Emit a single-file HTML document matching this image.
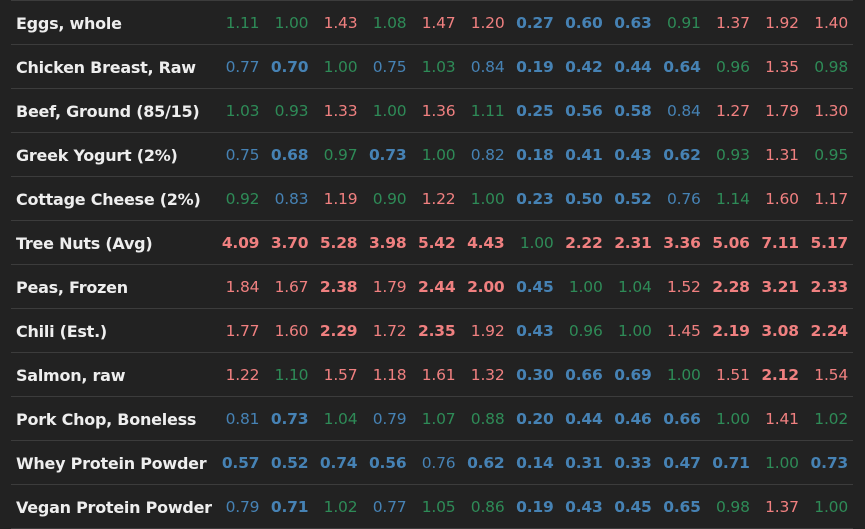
<!DOCTYPE html>
<html><head><meta charset="utf-8"><style>
html,body{margin:0;padding:0;background:#222;width:865px;height:529px;overflow:hidden}
table{border-collapse:collapse;table-layout:fixed;position:absolute;left:11px;top:0;width:842px;font-family:"DejaVu Sans","Liberation Sans",sans-serif;font-size:15.5px}
td{height:42px;padding:1px 0 0 0;border-bottom:1px solid #3c3c3c;white-space:nowrap}
tr:first-child td{border-top:1px solid #3c3c3c}
td.n{width:204px;color:#eee;font-weight:bold;padding-left:5px;text-align:left;font-size:16px;letter-spacing:-0.25px}
td:not(.n){width:49px;text-align:right;padding-right:5px;box-sizing:border-box;letter-spacing:-0.2px}
.g{color:#2e8b57}.b{color:#4682b4}.r{color:#f08080}.B{font-weight:bold}
</style></head><body>
<table>
<colgroup><col style="width:204px"><col span="13" style="width:49px"></colgroup>
<tr><td class="n">Eggs, whole</td><td class="g">1.11</td><td class="g">1.00</td><td class="r">1.43</td><td class="g">1.08</td><td class="r">1.47</td><td class="r">1.20</td><td class="b B">0.27</td><td class="b B">0.60</td><td class="b B">0.63</td><td class="g">0.91</td><td class="r">1.37</td><td class="r">1.92</td><td class="r">1.40</td></tr>
<tr><td class="n">Chicken Breast, Raw</td><td class="b">0.77</td><td class="b B">0.70</td><td class="g">1.00</td><td class="b">0.75</td><td class="g">1.03</td><td class="b">0.84</td><td class="b B">0.19</td><td class="b B">0.42</td><td class="b B">0.44</td><td class="b B">0.64</td><td class="g">0.96</td><td class="r">1.35</td><td class="g">0.98</td></tr>
<tr><td class="n">Beef, Ground (85/15)</td><td class="g">1.03</td><td class="g">0.93</td><td class="r">1.33</td><td class="g">1.00</td><td class="r">1.36</td><td class="g">1.11</td><td class="b B">0.25</td><td class="b B">0.56</td><td class="b B">0.58</td><td class="b">0.84</td><td class="r">1.27</td><td class="r">1.79</td><td class="r">1.30</td></tr>
<tr><td class="n">Greek Yogurt (2%)</td><td class="b">0.75</td><td class="b B">0.68</td><td class="g">0.97</td><td class="b B">0.73</td><td class="g">1.00</td><td class="b">0.82</td><td class="b B">0.18</td><td class="b B">0.41</td><td class="b B">0.43</td><td class="b B">0.62</td><td class="g">0.93</td><td class="r">1.31</td><td class="g">0.95</td></tr>
<tr><td class="n">Cottage Cheese (2%)</td><td class="g">0.92</td><td class="b">0.83</td><td class="r">1.19</td><td class="g">0.90</td><td class="r">1.22</td><td class="g">1.00</td><td class="b B">0.23</td><td class="b B">0.50</td><td class="b B">0.52</td><td class="b">0.76</td><td class="g">1.14</td><td class="r">1.60</td><td class="r">1.17</td></tr>
<tr><td class="n">Tree Nuts (Avg)</td><td class="r B">4.09</td><td class="r B">3.70</td><td class="r B">5.28</td><td class="r B">3.98</td><td class="r B">5.42</td><td class="r B">4.43</td><td class="g">1.00</td><td class="r B">2.22</td><td class="r B">2.31</td><td class="r B">3.36</td><td class="r B">5.06</td><td class="r B">7.11</td><td class="r B">5.17</td></tr>
<tr><td class="n">Peas, Frozen</td><td class="r">1.84</td><td class="r">1.67</td><td class="r B">2.38</td><td class="r">1.79</td><td class="r B">2.44</td><td class="r B">2.00</td><td class="b B">0.45</td><td class="g">1.00</td><td class="g">1.04</td><td class="r">1.52</td><td class="r B">2.28</td><td class="r B">3.21</td><td class="r B">2.33</td></tr>
<tr><td class="n">Chili (Est.)</td><td class="r">1.77</td><td class="r">1.60</td><td class="r B">2.29</td><td class="r">1.72</td><td class="r B">2.35</td><td class="r">1.92</td><td class="b B">0.43</td><td class="g">0.96</td><td class="g">1.00</td><td class="r">1.45</td><td class="r B">2.19</td><td class="r B">3.08</td><td class="r B">2.24</td></tr>
<tr><td class="n">Salmon, raw</td><td class="r">1.22</td><td class="g">1.10</td><td class="r">1.57</td><td class="r">1.18</td><td class="r">1.61</td><td class="r">1.32</td><td class="b B">0.30</td><td class="b B">0.66</td><td class="b B">0.69</td><td class="g">1.00</td><td class="r">1.51</td><td class="r B">2.12</td><td class="r">1.54</td></tr>
<tr><td class="n">Pork Chop, Boneless</td><td class="b">0.81</td><td class="b B">0.73</td><td class="g">1.04</td><td class="b">0.79</td><td class="g">1.07</td><td class="g">0.88</td><td class="b B">0.20</td><td class="b B">0.44</td><td class="b B">0.46</td><td class="b B">0.66</td><td class="g">1.00</td><td class="r">1.41</td><td class="g">1.02</td></tr>
<tr><td class="n">Whey Protein Powder</td><td class="b B">0.57</td><td class="b B">0.52</td><td class="b B">0.74</td><td class="b B">0.56</td><td class="b">0.76</td><td class="b B">0.62</td><td class="b B">0.14</td><td class="b B">0.31</td><td class="b B">0.33</td><td class="b B">0.47</td><td class="b B">0.71</td><td class="g">1.00</td><td class="b B">0.73</td></tr>
<tr><td class="n">Vegan Protein Powder</td><td class="b">0.79</td><td class="b B">0.71</td><td class="g">1.02</td><td class="b">0.77</td><td class="g">1.05</td><td class="g">0.86</td><td class="b B">0.19</td><td class="b B">0.43</td><td class="b B">0.45</td><td class="b B">0.65</td><td class="g">0.98</td><td class="r">1.37</td><td class="g">1.00</td></tr>
</table>
</body></html>
